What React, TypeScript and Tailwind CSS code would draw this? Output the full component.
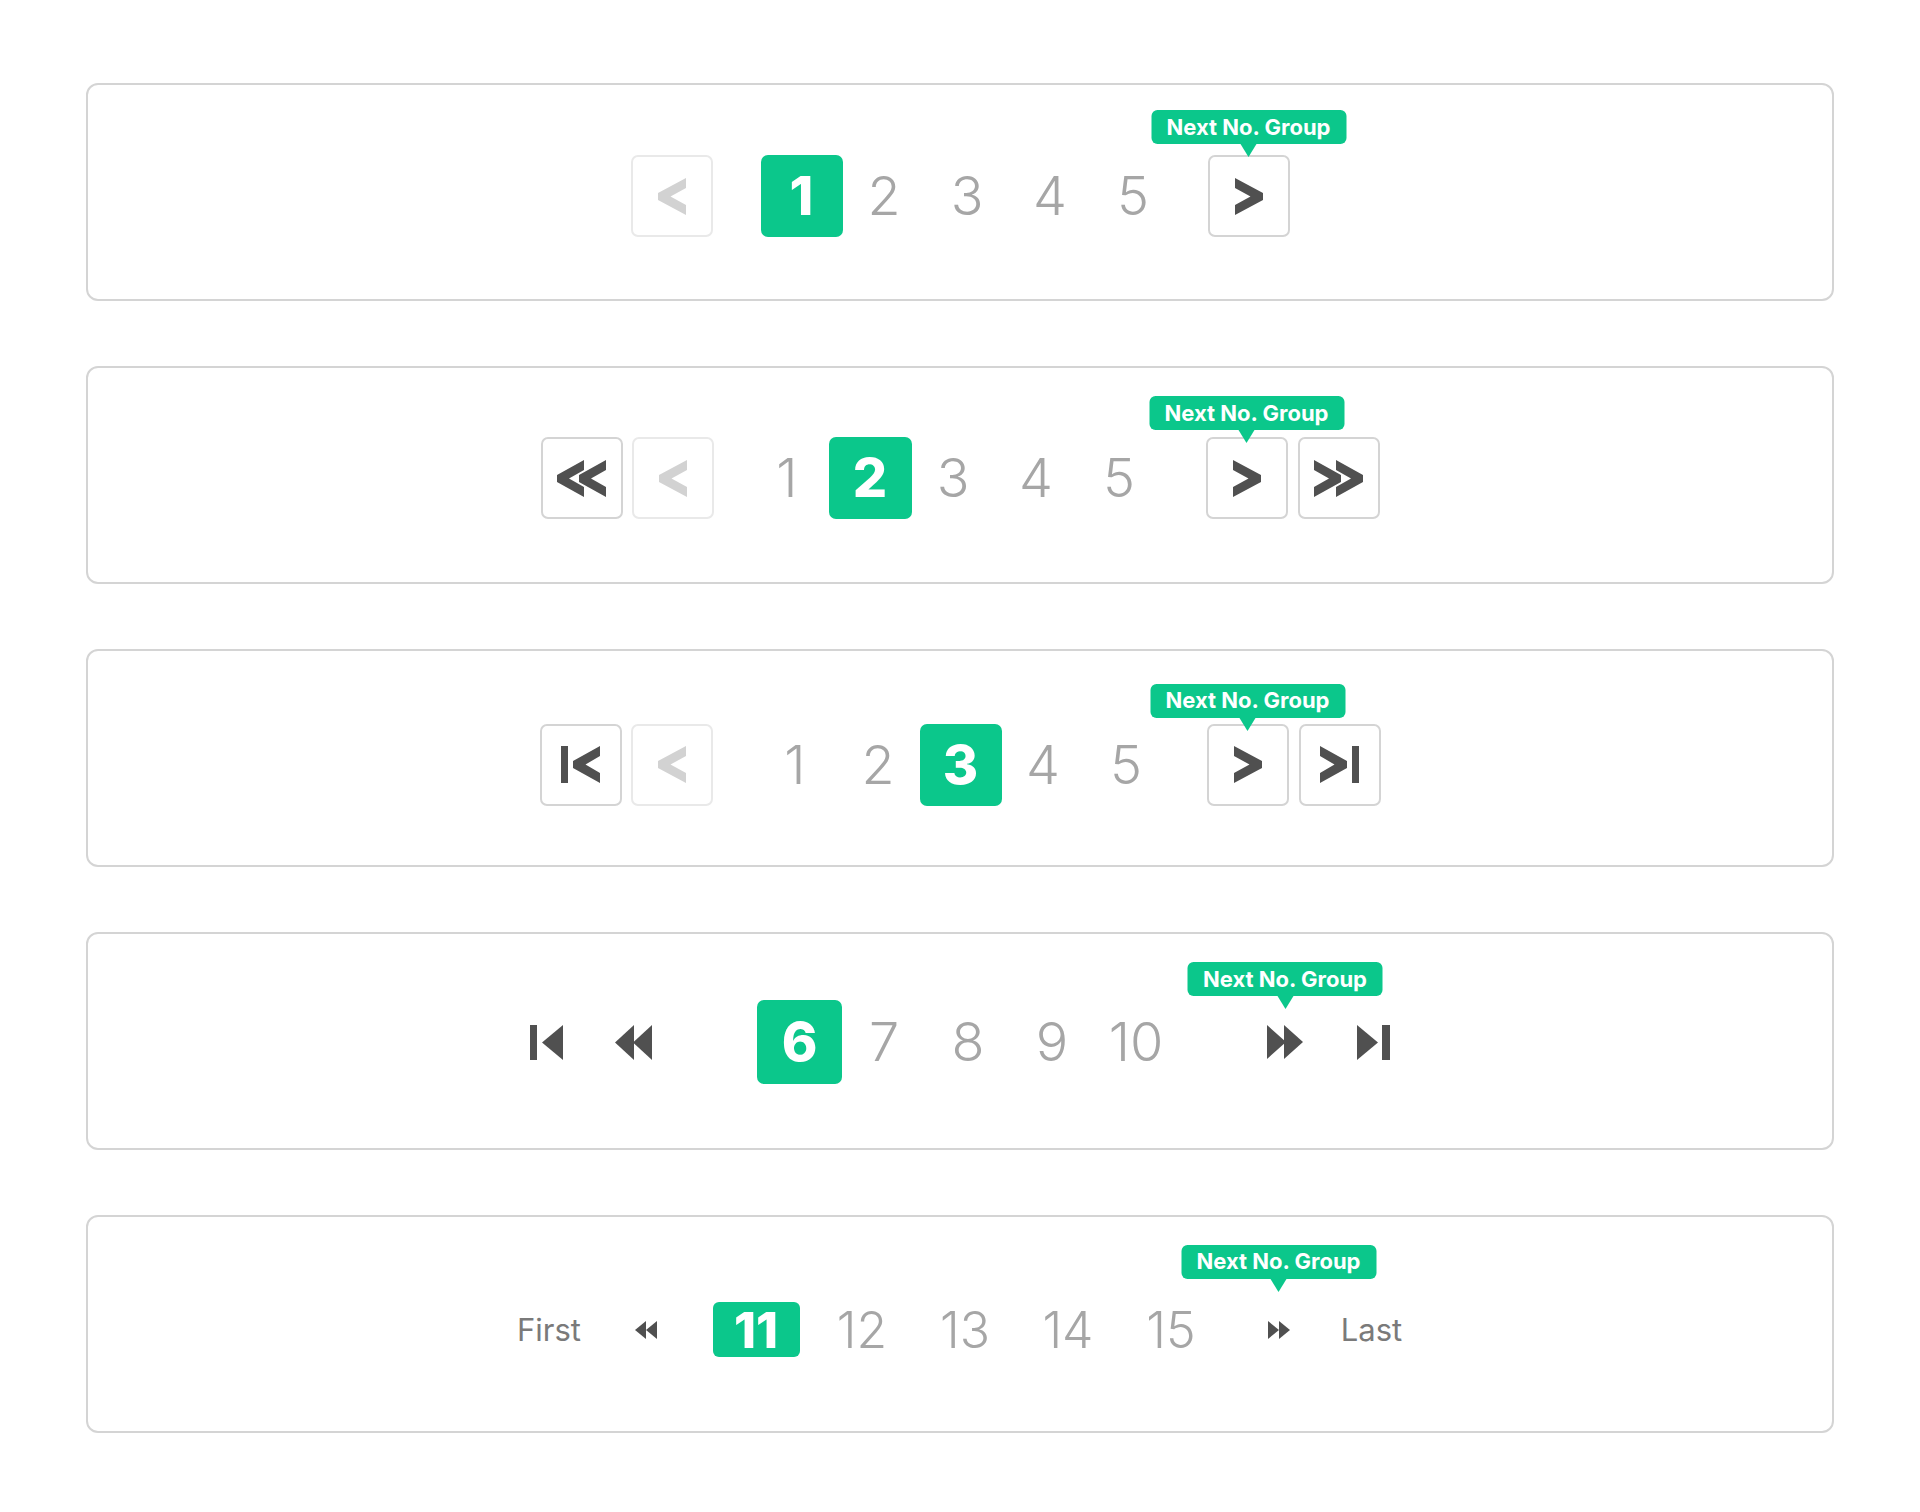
import React from 'react';

const DARK = '#505050';
const LIGHT = '#d2d2d2';

function Chevron({ dir, color }: { dir: 'left' | 'right'; color: string }) {
    const pts =
        dir === 'left'
            ? '28,0 28,10 12.5,18.5 28,27 28,37 0,22 0,15'
            : '0,0 0,10 15.5,18.5 0,27 0,37 28,22 28,15';
    return (
        <svg width="28" height="37" viewBox="0 0 28 37">
            <polygon points={pts} fill={color} />
        </svg>
    );
}

function DoubleChevron({ dir }: { dir: 'left' | 'right' }) {
    return (
        <svg width="49" height="37" viewBox="0 0 49 37">
            {dir === 'left' ? (
                <>
                    <polygon points="27,0 27,10 12,18.5 27,27 27,37 0,22 0,15" fill={DARK} />
                    <polygon points="49,0 49,10 34,18.5 49,27 49,37 22,22 22,15" fill={DARK} />
                </>
            ) : (
                <>
                    <polygon points="0,0 0,10 15,18.5 0,27 0,37 27,22 27,15" fill={DARK} />
                    <polygon points="22,0 22,10 37,18.5 22,27 22,37 49,22 49,15" fill={DARK} />
                </>
            )}
        </svg>
    );
}

function BarChevron({ dir }: { dir: 'first' | 'last' }) {
    return (
        <svg width="39" height="37" viewBox="0 0 39 37">
            {dir === 'first' ? (
                <>
                    <rect x="0" y="0" width="7" height="37" fill={DARK} />
                    <polygon points="39,0 39,10 24.5,18.5 39,27 39,37 12,22 12,15" fill={DARK} />
                </>
            ) : (
                <>
                    <polygon points="0,0 0,10 14.5,18.5 0,27 0,37 27,22 27,15" fill={DARK} />
                    <rect x="32" y="0" width="7" height="37" fill={DARK} />
                </>
            )}
        </svg>
    );
}

function Btn({ children, disabled, className = '' }: { children: React.ReactNode; disabled?: boolean; className?: string }) {
    return (
        <div
            className={`flex h-[82px] w-[82px] items-center justify-center rounded-[7px] border-2 bg-white ${
                disabled ? 'border-[#e9e9e9]' : 'border-[#d4d4d4]'
            } ${className}`}
        >
            {children}
        </div>
    );
}

function Tip({ pos }: { pos: string }) {
    return (
        <div className={`pointer-events-none absolute left-1/2 -translate-x-1/2 ${pos} flex flex-col items-center`}>
            <div className="flex h-[34px] w-[195px] items-center justify-center whitespace-nowrap rounded-[6px] bg-[#0bc78b] text-[22px] font-bold text-white">
                Next No. Group
            </div>
            <div className="h-0 w-0 border-l-[8px] border-r-[8px] border-t-[13px] border-l-transparent border-r-transparent border-t-[#0bc78b]" />
        </div>
    );
}

function Num({ n, className }: { n: string; className: string }) {
    return <div className={`flex justify-center font-light leading-none text-[#a6a6a6] ${className}`}>{n}</div>;
}

function Panel({ children, pad }: { children: React.ReactNode; pad: string }) {
    return (
        <div className={`flex h-[218px] items-center justify-center rounded-[12px] border-2 border-[#d4d4d4] ${pad}`}>
            {children}
        </div>
    );
}

export default function App() {
    return (
        <div className="min-h-[1512px] w-full bg-white pt-[83px] font-['Inter',sans-serif]">
            <div className="mx-auto flex w-[1748px] flex-col gap-[65px]">
                {/* 1 */}
                <Panel pad="pt-[8px]">
                    <Btn disabled>
                        <Chevron dir="left" color={LIGHT} />
                    </Btn>
                    <div className="ml-[48px] flex items-center">
                        <div className="flex h-[82px] w-[82px] items-center justify-center rounded-[7px] bg-[#0bc78b] text-[54px] font-extrabold leading-none text-white">
                            1
                        </div>
                        {['2', '3', '4', '5'].map((n) => (
                            <Num key={n} n={n} className="w-[83px] text-[54px]" />
                        ))}
                    </div>
                    <div className="relative ml-[33px]">
                        <Btn>
                            <Chevron dir="right" color={DARK} />
                        </Btn>
                        <Tip pos="bottom-[calc(100%-2px)]" />
                    </div>
                </Panel>

                {/* 2 */}
                <Panel pad="pt-[6px]">
                    <Btn>
                        <DoubleChevron dir="left" />
                    </Btn>
                    <Btn disabled className="ml-[9px]">
                        <Chevron dir="left" color={LIGHT} />
                    </Btn>
                    <div className="ml-[32px] flex items-center">
                        <Num n="1" className="w-[83px] text-[54px]" />
                        <div className="flex h-[82px] w-[83px] items-center justify-center rounded-[7px] bg-[#0bc78b] text-[54px] font-extrabold leading-none text-white">
                            2
                        </div>
                        {['3', '4', '5'].map((n) => (
                            <Num key={n} n={n} className="w-[83px] text-[54px]" />
                        ))}
                    </div>
                    <div className="relative ml-[45px]">
                        <Btn>
                            <Chevron dir="right" color={DARK} />
                        </Btn>
                        <Tip pos="bottom-[calc(100%-6px)]" />
                    </div>
                    <Btn className="ml-[10px]">
                        <DoubleChevron dir="right" />
                    </Btn>
                </Panel>

                {/* 3 */}
                <Panel pad="pt-[13px]">
                    <Btn>
                        <BarChevron dir="first" />
                    </Btn>
                    <Btn disabled className="ml-[9px]">
                        <Chevron dir="left" color={LIGHT} />
                    </Btn>
                    <div className="ml-[41px] flex items-center">
                        <Num n="1" className="w-[83px] text-[54px]" />
                        <Num n="2" className="w-[83px] text-[54px]" />
                        <div className="flex h-[82px] w-[82px] items-center justify-center rounded-[7px] bg-[#0bc78b] text-[54px] font-extrabold leading-none text-white">
                            3
                        </div>
                        <Num n="4" className="w-[83px] text-[54px]" />
                        <Num n="5" className="w-[83px] text-[54px]" />
                    </div>
                    <div className="relative ml-[39px]">
                        <Btn>
                            <Chevron dir="right" color={DARK} />
                        </Btn>
                        <Tip pos="bottom-[calc(100%-7px)]" />
                    </div>
                    <Btn className="ml-[10px]">
                        <BarChevron dir="last" />
                    </Btn>
                </Panel>

                {/* 4 */}
                <Panel pad="pt-[2px]">
                    <svg width="33" height="35" viewBox="0 0 33 35">
                        <rect x="0" y="0" width="7" height="35" fill={DARK} />
                        <polygon points="12,17.5 33,0 33,35" fill={DARK} />
                    </svg>
                    <svg className="ml-[52px]" width="37" height="35" viewBox="0 0 37 35">
                        <polygon points="0,17.5 19,0 19,35" fill={DARK} />
                        <polygon points="18,17.5 37,0 37,35" fill={DARK} />
                    </svg>
                    <div className="ml-[105px] flex items-center">
                        <div className="flex h-[84px] w-[85px] items-center justify-center rounded-[7px] bg-[#0bc78b] text-[54px] font-extrabold leading-none text-white">
                            6
                        </div>
                        {['7', '8', '9', '10'].map((n) => (
                            <Num key={n} n={n} className="w-[84px] text-[54px]" />
                        ))}
                    </div>
                    <div className="relative ml-[89px] flex">
                        <svg width="36" height="34" viewBox="0 0 36 34">
                            <polygon points="0,0 19,17 0,34" fill={DARK} />
                            <polygon points="17,0 36,17 17,34" fill={DARK} />
                        </svg>
                        <Tip pos="bottom-[calc(100%+16px)]" />
                    </div>
                    <svg className="ml-[54px]" width="33" height="35" viewBox="0 0 33 35">
                        <polygon points="0,0 21,17.5 0,35" fill={DARK} />
                        <rect x="25" y="0" width="8" height="35" fill={DARK} />
                    </svg>
                </Panel>

                {/* 5 */}
                <Panel pad="pt-[11px]">
                    <div className="flex w-[63px] justify-center whitespace-nowrap text-[31px] leading-none text-[#7a7a7a]">
                        First
                    </div>
                    <svg className="ml-[54px]" width="22" height="18" viewBox="0 0 22 18">
                        <polygon points="0,9 11,0 11,18" fill={DARK} />
                        <polygon points="11,9 22,0 22,18" fill={DARK} />
                    </svg>
                    <div className="ml-[56px] flex items-center">
                        <div className="flex h-[55px] w-[87px] items-center justify-center rounded-[6px] bg-[#0bc78b] text-[50px] font-extrabold leading-none text-white">
                            11
                        </div>
                        <div className="ml-[11px] flex items-center">
                            {['12', '13', '14', '15'].map((n) => (
                                <Num key={n} n={n} className="w-[103px] text-[50px]" />
                            ))}
                        </div>
                    </div>
                    <div className="relative ml-[45px] flex">
                        <svg width="22" height="18" viewBox="0 0 22 18">
                            <polygon points="0,0 11,9 0,18" fill={DARK} />
                            <polygon points="11,0 22,9 11,18" fill={DARK} />
                        </svg>
                        <Tip pos="bottom-[calc(100%+29px)]" />
                    </div>
                    <div className="ml-[51px] flex w-[62px] justify-center whitespace-nowrap text-[31px] leading-none text-[#7a7a7a]">
                        Last
                    </div>
                </Panel>
            </div>
        </div>
    );
}
